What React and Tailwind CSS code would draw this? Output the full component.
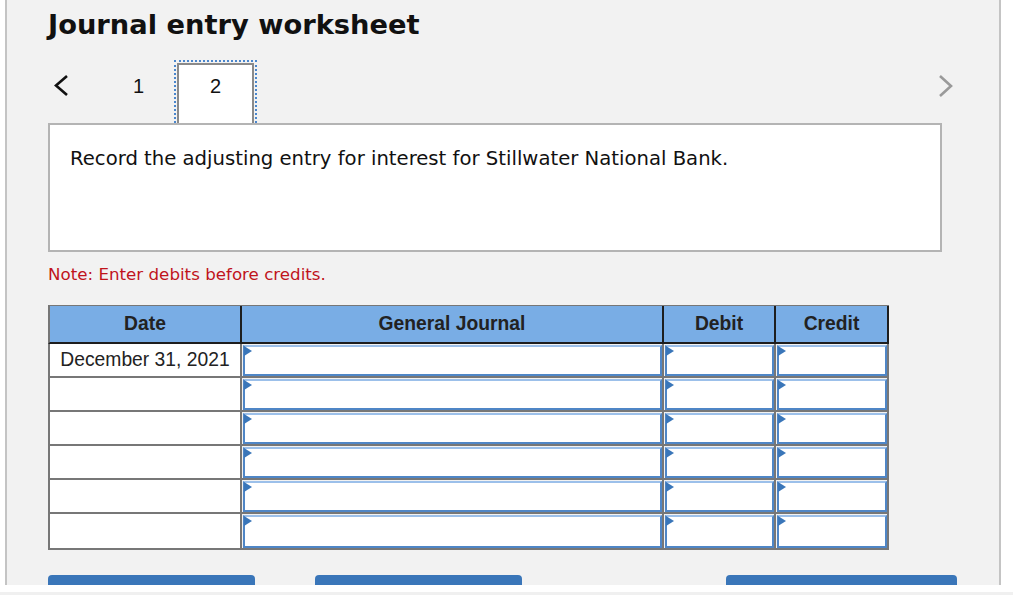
import React from "react";

const columns = [
  { key: "date", label: "Date", width: "w-[192px]" },
  { key: "journal", label: "General Journal", width: "w-[422px]" },
  { key: "debit", label: "Debit", width: "w-[112px]" },
  { key: "credit", label: "Credit", width: "w-[113px]" },
];

const rows = ["December 31, 2021", "", "", "", "", ""];

const InputCell = ({ width }) => (
  <div className={`${width} h-full border-r-2 border-[#777777] pl-px pt-px`}>
    <div className="relative h-full border-2 border-[#4f86c6] border-t-[#9cc0ea] bg-white">
      {/* little dropdown flag in the corner */}
      <svg className="absolute -left-[1px] -top-[1px]" width="9" height="11" viewBox="0 0 9 11">
        <polygon points="0,0 8,5 0,10" fill="#3a76b9" />
      </svg>
    </div>
  </div>
);

const JournalTable = () => (
  <div className="w-[841px] font-['Liberation_Sans',Arial,sans-serif] text-[19.3px] text-[#222222]">
    {/* header starts here */}
    <div className="flex h-[39px] border-t border-l-2 border-t-[#777777] border-l-[#777777] border-b-2 border-b-[#1e1e1e] bg-[#79ade5]">
      {columns.map((col) => (
        <div
          key={col.key}
          className={`${col.width} flex h-full items-center justify-center border-r-2 border-[#1e1e1e] font-bold`}
        >
          {col.label}
        </div>
      ))}
    </div>
    {/* header ends here */}

    {rows.map((date, i) => (
      <div
        key={i}
        className={`flex ${i === rows.length - 1 ? "h-[36px]" : "h-[34px]"} border-l-2 border-b-2 border-[#777777]`}
      >
        <div className="flex w-[192px] h-full items-center justify-center border-r-2 border-[#777777] bg-white">
          {date}
        </div>
        <InputCell width="w-[422px]" />
        <InputCell width="w-[112px]" />
        <InputCell width="w-[113px]" />
      </div>
    ))}
  </div>
);

export default function App() {
  return (
    <div className="w-[1015px] h-[604px] overflow-hidden bg-white">
      <div className="ml-[5px] w-[996px] h-[585px] overflow-hidden border-x-2 border-[#c4c4c4] bg-[#f2f2f2] pl-[41px] pt-[9px]">
        <h1 className="font-['DejaVu_Sans',Verdana,sans-serif] text-[27.3px] leading-[32px] font-bold text-[#111111]">
          Journal entry worksheet
        </h1>

        {/* pagination starts here */}
        <div className="mt-[22px] flex h-[60px] items-start">
          <div className="w-[52px] pl-[5px] pt-[11px]">
            <svg width="16" height="23" viewBox="0 0 16 23">
              <polyline points="14,2 3,11.5 14,21" fill="none" stroke="#111111" strokeWidth="2.6" />
            </svg>
          </div>
          <div className="w-[77px] h-full pt-[12px] text-center font-['Liberation_Sans',Arial,sans-serif] text-[20px] leading-[23px] text-[#111111]">
            1
          </div>
          <div className="w-[77px] h-[61px] border-x-2 border-t-2 border-[#8a8a8a] bg-white pt-[10px] text-center font-['Liberation_Sans',Arial,sans-serif] text-[20px] leading-[23px] text-[#111111] outline-2 outline-dotted outline-[#4a86cc] outline-offset-[1px]">
            2
          </div>
          <div className="ml-auto mr-[45px] pt-[12px]">
            <svg width="16" height="23" viewBox="0 0 16 23">
              <polyline points="2,1 13,11 2,21" fill="none" stroke="#9a9a9a" strokeWidth="2.6" />
            </svg>
          </div>
        </div>
        {/* pagination ends here */}

        <div className="relative w-[894px] h-[129px] border-2 border-[#b4b4b4] bg-white pl-[20px] pt-[22px]">
          <p className="font-['DejaVu_Sans',Verdana,sans-serif] text-[19.65px] leading-[24px] text-[#111111]">
            Record the adjusting entry for interest for Stillwater National Bank.
          </p>
        </div>

        <p className="mt-[12px] font-['DejaVu_Sans',Verdana,sans-serif] text-[16.7px] leading-[20px] text-[#c0141c]">
          Note: Enter debits before credits.
        </p>

        <div className="mt-[21px]">
          <JournalTable />
        </div>

        <div className="mt-[25px] flex">
          <div className="w-[207px] h-[40px] rounded-t-[4px] bg-[#3a76b9]" />
          <div className="ml-[60px] w-[207px] h-[40px] rounded-t-[4px] bg-[#3a76b9]" />
          <div className="ml-[204px] w-[231px] h-[40px] rounded-t-[4px] bg-[#3a76b9]" />
        </div>
      </div>
      <div className="mt-[7px] h-[3px] w-[1013px] bg-[#f0f0f0]" />
    </div>
  );
}
